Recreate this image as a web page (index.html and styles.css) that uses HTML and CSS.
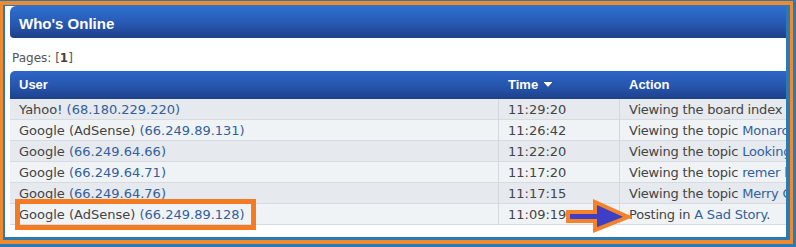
FILE: index.html
```html
<!DOCTYPE html>
<html lang="en">
<head>
  <meta charset="UTF-8" />
  <title>Who's Online</title>
  <link rel="stylesheet" href="styles.css">
</head>
<body>
  <div class="frame">
    <div class="inner">
      <div class="cat">Who's Online</div>
      <div class="pages">Pages: [<b>1</b>]</div>
      <table class="grid">
        <thead>
          <tr>
            <th class="c-user">User</th>
            <th class="c-time">Time <svg class="sort" width="12" height="7" viewBox="0 0 12 7"><polygon points="0.5,0.5 11.5,0.5 6,6.5" fill="#fff" stroke="#1b3a7c" stroke-width="0.8"/></svg></th>
            <th class="c-action">Action</th>
          </tr>
        </thead>
        <tbody>
          <tr class="dark">
            <td>Yahoo! <a href="#">(68.180.229.220)</a></td>
            <td>11:29:20</td>
            <td class="act">Viewing the board index of Forum</td>
          </tr>
          <tr>
            <td>Google (AdSense) <a href="#">(66.249.89.131)</a></td>
            <td>11:26:42</td>
            <td class="act">Viewing the topic <a href="#">Monarch Butterflies</a></td>
          </tr>
          <tr class="dark">
            <td>Google <a href="#">(66.249.64.66)</a></td>
            <td>11:22:20</td>
            <td class="act">Viewing the topic <a href="#">Looking for help</a></td>
          </tr>
          <tr>
            <td>Google <a href="#">(66.249.64.71)</a></td>
            <td>11:17:20</td>
            <td class="act">Viewing the topic <a href="#">remer has left</a></td>
          </tr>
          <tr class="dark">
            <td>Google <a href="#">(66.249.64.76)</a></td>
            <td>11:17:15</td>
            <td class="act">Viewing the topic <a href="#">Merry Christmas</a></td>
          </tr>
          <tr>
            <td>Google (AdSense) <a href="#">(66.249.89.128)</a></td>
            <td>11:09:19</td>
            <td class="act">Posting in <a href="#">A Sad Story</a>.</td>
          </tr>
        </tbody>
      </table>
    </div>
  </div>

  <div class="mark"></div>
  <svg class="arrow" width="68" height="36" viewBox="0 0 68 36">
    <polygon points="4,14 31,14 31,4 64,19 31,32 31,23 4,23" fill="#3d3fc6" stroke="#f5822a" stroke-width="4" stroke-linejoin="miter"/>
  </svg>
</body>
</html>
```

FILE: styles.css
```css
html, body {
  margin: 0;
  padding: 0;
  background: #2d79b3;
}
body {
  position: relative;
  width: 796px;
  height: 247px;
  overflow: hidden;
  font-family: "DejaVu Sans", Verdana, sans-serif;
  color: #444;
}
.frame {
  box-sizing: border-box;
  width: 793px;
  height: 243px;
  margin-top: 1px;
  border-style: solid;
  border-color: #ef8a2f;
  border-width: 4px 3px 4px 3px;
}
.inner {
  box-sizing: border-box;
  height: 235px;
  background: #fff;
  border-style: solid;
  border-color: #2b7ab2;
  border-width: 1px 4px 3px 2px;
  overflow: hidden;
}
.cat {
  margin-left: 5px;
  height: 32px;
  box-sizing: border-box;
  padding: 3px 0 0 9px;
  line-height: 29px;
  font-family: "Liberation Sans", Arial, sans-serif;
  font-weight: bold;
  font-size: 15px;
  color: #fff;
  border-radius: 6px 0 0 4px;
  background: linear-gradient(to bottom, #2f6fd1 0%, #2759b2 55%, #1e4088 100%);
}
.pages {
  height: 33px;
  box-sizing: border-box;
  padding: 12px 0 5px 7px;
  line-height: 16px;
  font-size: 12px;
  color: #555;
}
.pages b {
  color: #444;
}
.grid {
  margin-left: 5px;
  width: 900px;
  table-layout: fixed;
  border-collapse: separate;
  border-spacing: 0;
  font-size: 13px;
}
.grid th {
  height: 28px;
  box-sizing: border-box;
  padding: 0 0 2px 9px;
  text-align: left;
  font-family: "Liberation Sans", Arial, sans-serif;
  font-weight: bold;
  font-size: 13px;
  color: #fff;
  background: linear-gradient(to bottom, #2e66c8 0%, #2655ad 55%, #1f408a 100%);
  white-space: nowrap;
}
.grid th.c-user {
  width: 489px;
  border-top-left-radius: 5px;
}
.grid th.c-time {
  width: 121px;
}
.grid th.c-action {
  width: 290px;
}
.sort {
  margin-left: 0;
  vertical-align: 1px;
}
.grid td {
  height: 21px;
  box-sizing: border-box;
  padding: 2px 0 0 9px;
  line-height: 16px;
  white-space: nowrap;
  overflow: hidden;
  background: #f0f3f6;
  border-bottom: 1px solid #d6dbe1;
  border-right: 1px solid #d3d8de;
}
.grid td.act {
  letter-spacing: -0.2px;
}
.grid tr.dark td {
  background: #e6e9ee;
}
.grid a {
  color: #33609b;
  text-decoration: none;
}
.mark {
  position: absolute;
  left: 15px;
  top: 199px;
  width: 241px;
  height: 31px;
  box-sizing: border-box;
  border: 5px solid #f47b22;
}
.arrow {
  position: absolute;
  left: 564px;
  top: 198px;
}
```
